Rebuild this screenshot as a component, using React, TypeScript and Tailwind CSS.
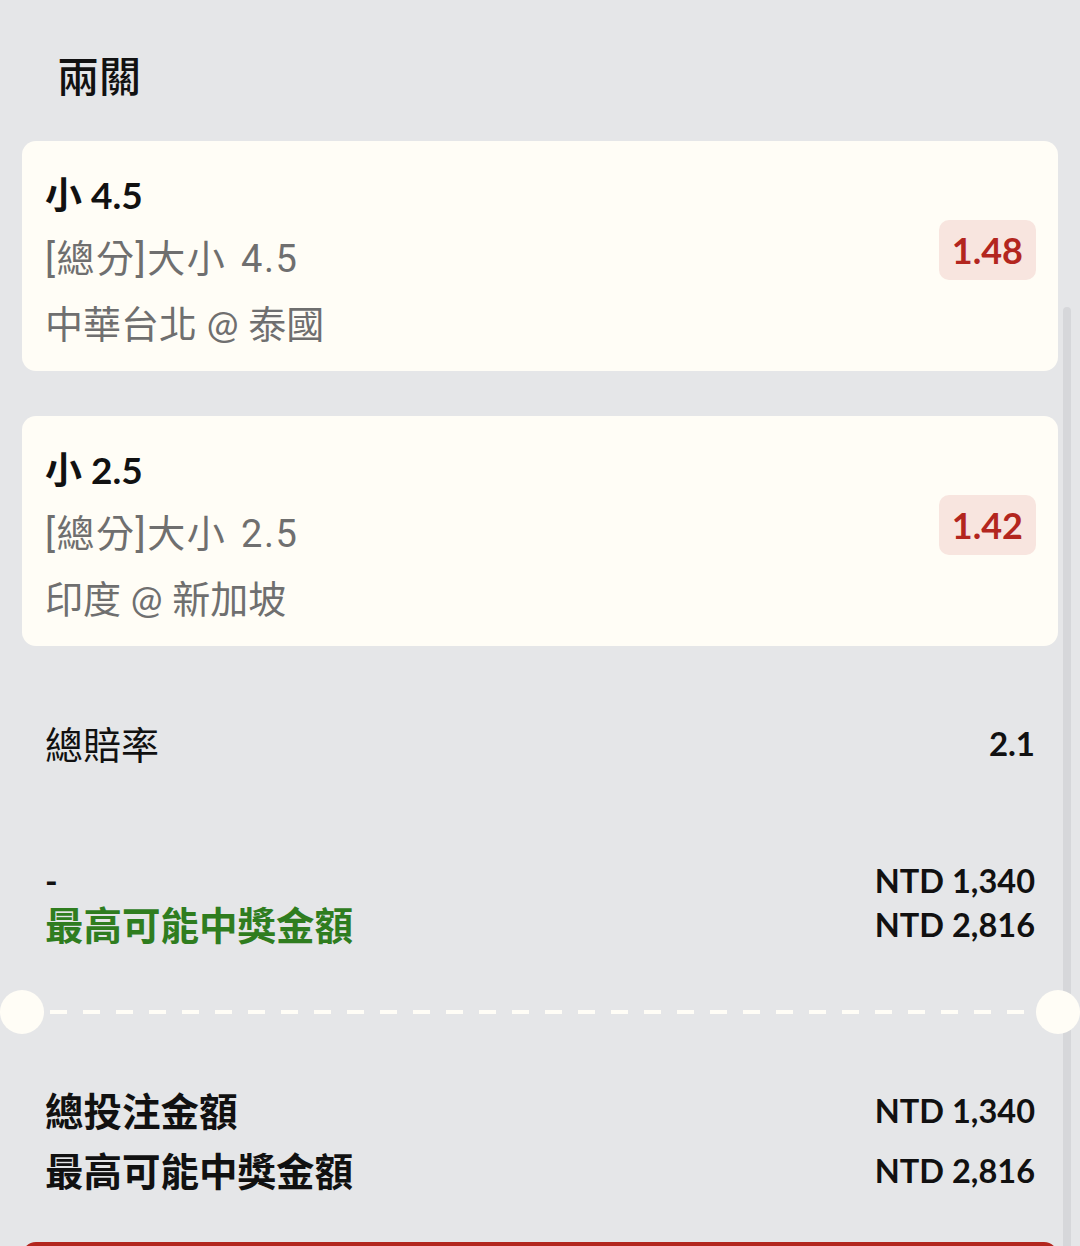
import React from "react";

const FONT = { fontFamily: '"Lato", "Noto Sans CJK TC", sans-serif' };
const MARKET = { fontFamily: 'Roboto, "Noto Sans CJK TC", sans-serif' };

function BetCard({ title, market, match, odds }: { title: string; market: string; match: string; odds: string }) {
  return (
    <div className="flex items-center justify-between rounded-[14px] bg-[#fffdf6] pl-[23px] pr-[22px] pt-[22px] pb-[16px]">
      <div className="flex flex-col">
        <div className="text-[37px] leading-[64px] font-bold text-[#111111]">{title}</div>
        <div style={MARKET} className="text-[38px] leading-[64px] tracking-[1.5px] [word-spacing:4px] text-[#6f6f6f]">{market}</div>
        <div className="text-[38px] leading-[64px] text-[#6f6f6f]">{match}</div>
      </div>
      <div className="-mt-[18px] rounded-[10px] bg-[#f8e5df] px-[13px] h-[60px] flex items-center text-[36px] font-bold text-[#b3261e]">
        {odds}
      </div>
    </div>
  );
}

export default function App() {
  return (
    <div style={FONT} className="relative w-full h-[1246px] overflow-hidden bg-[#e5e6e8] text-[#111111]">
      <div className="absolute right-[9px] top-[307px] w-[8px] h-[1000px] rounded-full bg-[#d6d7da]" />
      <div className="relative flex flex-col">
        <div className="pl-[57px] pt-[48px] text-[42px] leading-[56px] font-medium">兩關</div>
        <div className="mt-[37px] flex flex-col gap-[45px] px-[22px]">
          <BetCard title="小 4.5" market="[總分]大小 4.5" match="中華台北 @ 泰國" odds="1.48" />
          <BetCard title="小 2.5" market="[總分]大小 2.5" match="印度 @ 新加坡" odds="1.42" />
        </div>
        <div className="mt-[74px] flex items-center justify-between px-[45px] h-[48px]">
          <span className="text-[38px]">總賠率</span>
          <span className="text-[33px] font-bold">2.1</span>
        </div>
        <div className="mt-[91px] flex justify-between px-[45px]">
          <div className="flex flex-col">
            <span className="text-[34px] leading-[44px] font-bold">-</span>
            <span className="text-[38.5px] leading-[44px] font-bold text-[#2f7d1f]">最高可能中獎金額</span>
          </div>
          <div className="flex flex-col items-end">
            <span className="text-[32.5px] leading-[44px] font-bold">NTD 1,340</span>
            <span className="text-[32.5px] leading-[44px] font-bold">NTD 2,816</span>
          </div>
        </div>
        <div className="mt-[43px] flex items-center h-[44px]">
          <div className="w-[44px] h-[44px] shrink-0 rounded-full bg-[#fffdf6]" />
          <div className="flex-1 mx-[6px] h-[4px] bg-[repeating-linear-gradient(to_right,#fffdf6_0_17px,transparent_17px_33px)]" />
          <div className="w-[44px] h-[44px] shrink-0 rounded-full bg-[#fffdf6]" />
        </div>
        <div className="mt-[47px] flex justify-between px-[45px]">
          <div className="flex flex-col">
            <span className="text-[38.5px] leading-[60px] font-bold">總投注金額</span>
            <span className="text-[38.5px] leading-[60px] font-bold">最高可能中獎金額</span>
          </div>
          <div className="flex flex-col items-end">
            <span className="text-[32.5px] leading-[60px] font-bold">NTD 1,340</span>
            <span className="text-[32.5px] leading-[60px] font-bold">NTD 2,816</span>
          </div>
        </div>
        <div className="mt-[41px] mx-[22px] h-[80px] rounded-t-[14px] bg-[#b3261e]" />
      </div>
    </div>
  );
}
